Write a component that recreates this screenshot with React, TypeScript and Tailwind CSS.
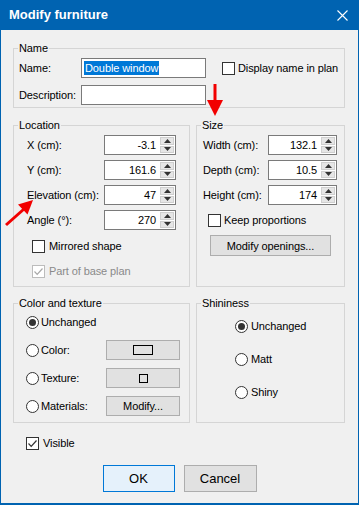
import React from "react";

const font = { fontFamily: '"Liberation Sans", Arial, sans-serif' };

const Group = ({ title, className = "", children }: { title: string; className?: string; children: React.ReactNode }) => (
  <fieldset className={`border border-[#d5d5d5] ${className}`}>
    <legend className="ml-[4px] px-[1px] leading-[16px]">{title}</legend>
    {children}
  </fieldset>
);

const CheckBox = ({ checked = false, disabled = false }: { checked?: boolean; disabled?: boolean }) => (
  <span
    className={`flex h-[13px] w-[13px] shrink-0 items-center justify-center border bg-white ${
      disabled ? "border-[#bcbcbc]" : "border-[#333333]"
    }`}
  >
    {checked && (
      <svg width="11" height="11" viewBox="0 0 11 11">
        <path d="M1.5 5.5 L4.2 8.3 L9.5 2.5" fill="none" stroke={disabled ? "#a8a8a8" : "#333"} strokeWidth="1.2" />
      </svg>
    )}
  </span>
);

const Radio = ({ checked = false }: { checked?: boolean }) => (
  <span className="flex h-[13px] w-[13px] shrink-0 items-center justify-center rounded-full border border-[#333333] bg-white">
    {checked && <span className="h-[7px] w-[7px] rounded-full bg-[#333333]" />}
  </span>
);

const Spin = ({ value, width }: { value: string; width: string }) => (
  <div className={`flex h-[20px] ${width} border border-[#7a7a7a] bg-white`}>
    <div className="flex flex-1 items-center justify-end pr-[4px] leading-none">{value}</div>
    <div className="flex w-[15px] flex-col gap-[1px] py-[1px] pr-[1px]">
      <div className="flex flex-1 items-center justify-center border border-[#cfcfcf] bg-[#e6e6e6]">
        <svg width="7" height="4" viewBox="0 0 7 4">
          <path d="M0 4 L3.5 0 L7 4 Z" fill="#333" />
        </svg>
      </div>
      <div className="flex flex-1 items-center justify-center border border-[#cfcfcf] bg-[#e6e6e6]">
        <svg width="7" height="4" viewBox="0 0 7 4">
          <path d="M0 0 L3.5 4 L7 0 Z" fill="#333" />
        </svg>
      </div>
    </div>
  </div>
);

const Btn = ({ children, className = "" }: { children: React.ReactNode; className?: string }) => (
  <div className={`flex items-center justify-center border border-[#adadad] bg-[#e1e1e1] ${className}`}>{children}</div>
);

export default function App() {
  return (
    <div
      className="relative flex h-[505px] w-[359px] flex-col bg-[#0063b1] text-[11px] leading-[16px] tracking-[-0.1px] text-black"
      style={font}
    >
      {/* Title bar */}
      <div className="flex h-[30px] shrink-0 items-center justify-between pl-[9px] pr-[11px] text-white">
        <span className="text-[13px] font-bold tracking-normal">Modify furniture</span>
        <svg width="11" height="11" viewBox="0 0 11 11">
          <path d="M0.5 0.5 L10.5 10.5 M10.5 0.5 L0.5 10.5" stroke="#fff" strokeWidth="1.1" />
        </svg>
      </div>

      <div className="mx-[1px] mb-[2px] flex flex-1 flex-col bg-[#f0f0f0] pl-[12px] pt-[10px]">
        {/* Name */}
        <Group title="Name" className="w-[332px]">
          <div className="flex flex-col gap-[7px] pb-[2px] pl-[5px] pt-[2px]">
            <div className="flex h-[20px] items-center">
              <span className="w-[62px]">Name:</span>
              <div className="flex h-[20px] w-[125px] items-center border border-[#7a7a7a] bg-white pl-[2px]">
                <span className="bg-[#0078d7] px-[1px] leading-[14px] text-white">Double window</span>
              </div>
              <div className="ml-[16px] flex items-center gap-[3px] whitespace-nowrap">
                <CheckBox />
                <span>Display name in plan</span>
              </div>
            </div>
            <div className="flex h-[20px] items-center">
              <span className="w-[62px]">Description:</span>
              <div className="h-[20px] w-[125px] border border-[#7a7a7a] bg-white" />
            </div>
          </div>
        </Group>

        <div className="mt-[9px] flex gap-[6px]">
          {/* Location */}
          <Group title="Location" className="h-[170px] w-[177px]">
            <div className="flex flex-col pl-[13px] pt-[2px]">
              <div className="flex flex-col gap-[5px]">
                {[
                  ["X (cm):", "-3.1"],
                  ["Y (cm):", "161.6"],
                  ["Elevation (cm):", "47"],
                  ["Angle (°):", "270"],
                ].map(([l, v]) => (
                  <div key={l} className="flex h-[20px] items-center">
                    <span className="w-[77px]">{l}</span>
                    <Spin value={v} width="w-[72px]" />
                  </div>
                ))}
              </div>
              <div className="mt-[8px] flex items-center gap-[4px] pl-[5px]">
                <CheckBox />
                <span>Mirrored shape</span>
              </div>
              <div className="mt-[9px] flex items-center gap-[4px] pl-[5px] text-[#8a8a8a]">
                <CheckBox checked disabled />
                <span>Part of base plan</span>
              </div>
            </div>
          </Group>

          {/* Size */}
          <Group title="Size" className="h-[170px] w-[149px]">
            <div className="flex flex-col pl-[6px] pt-[2px]">
              <div className="flex flex-col gap-[5px]">
                {[
                  ["Width (cm):", "132.1"],
                  ["Depth (cm):", "10.5"],
                  ["Height (cm):", "174"],
                ].map(([l, v]) => (
                  <div key={l} className="flex h-[20px] items-center">
                    <span className="w-[65px]">{l}</span>
                    <Spin value={v} width="w-[69px]" />
                  </div>
                ))}
              </div>
              <div className="mt-[7px] flex items-center gap-[3px] pl-[5px]">
                <CheckBox />
                <span>Keep proportions</span>
              </div>
              <Btn className="ml-[7px] mt-[7px] h-[21px] w-[121px]">Modify openings...</Btn>
            </div>
          </Group>
        </div>

        <div className="mt-[8px] flex gap-[6px]">
          {/* Color and texture */}
          <Group title="Color and texture" className="h-[128px] w-[177px]">
            <div className="flex flex-col gap-[8px] pl-[12px] pt-[1px]">
              <div className="flex h-[20px] items-center gap-[2px]">
                <Radio checked />
                <span>Unchanged</span>
              </div>
              <div className="flex h-[20px] items-center">
                <Radio />
                <span className="ml-[2px] w-[65px]">Color:</span>
                <Btn className="h-[20px] w-[74px]">
                  <span className="h-[10px] w-[20px] border border-black" />
                </Btn>
              </div>
              <div className="flex h-[20px] items-center">
                <Radio />
                <span className="ml-[2px] w-[65px]">Texture:</span>
                <Btn className="h-[20px] w-[74px]">
                  <span className="h-[9px] w-[9px] border border-black" />
                </Btn>
              </div>
              <div className="flex h-[20px] items-center">
                <Radio />
                <span className="ml-[2px] w-[65px]">Materials:</span>
                <Btn className="h-[20px] w-[74px]">Modify...</Btn>
              </div>
            </div>
          </Group>

          {/* Shininess */}
          <Group title="Shininess" className="h-[128px] w-[149px]">
            <div className="flex flex-col gap-[13px] pl-[38px] pt-[5px]">
              <div className="flex h-[20px] items-center gap-[3px]">
                <Radio checked />
                <span>Unchanged</span>
              </div>
              <div className="flex h-[20px] items-center gap-[3px]">
                <Radio />
                <span>Matt</span>
              </div>
              <div className="flex h-[20px] items-center gap-[3px]">
                <Radio />
                <span>Shiny</span>
              </div>
            </div>
          </Group>
        </div>

        <div className="mt-[12px] flex items-center gap-[4px] pl-[13px]">
          <CheckBox checked />
          <span>Visible</span>
        </div>

        <div className="mt-[14px] flex justify-center gap-[9px] pr-[12px] text-[13px] tracking-normal">
          <div className="flex h-[27px] w-[72px] items-center justify-center border border-[#0078d7] bg-[#e5f1fb]">OK</div>
          <Btn className="h-[27px] w-[73px]">Cancel</Btn>
        </div>
      </div>

      {/* Annotation arrows */}
      <svg className="pointer-events-none absolute left-0 top-0" width="359" height="505" viewBox="0 0 359 505">
        <line x1="215" y1="84" x2="215" y2="101" stroke="#f20000" strokeWidth="3" />
        <path d="M207 100 L223 100 L215 116 Z" fill="#f20000" />
        <line x1="6" y1="225" x2="24" y2="209" stroke="#f20000" strokeWidth="3" />
        <path d="M33 200 L18 204.5 L27.5 214.5 Z" fill="#f20000" />
      </svg>
    </div>
  );
}
